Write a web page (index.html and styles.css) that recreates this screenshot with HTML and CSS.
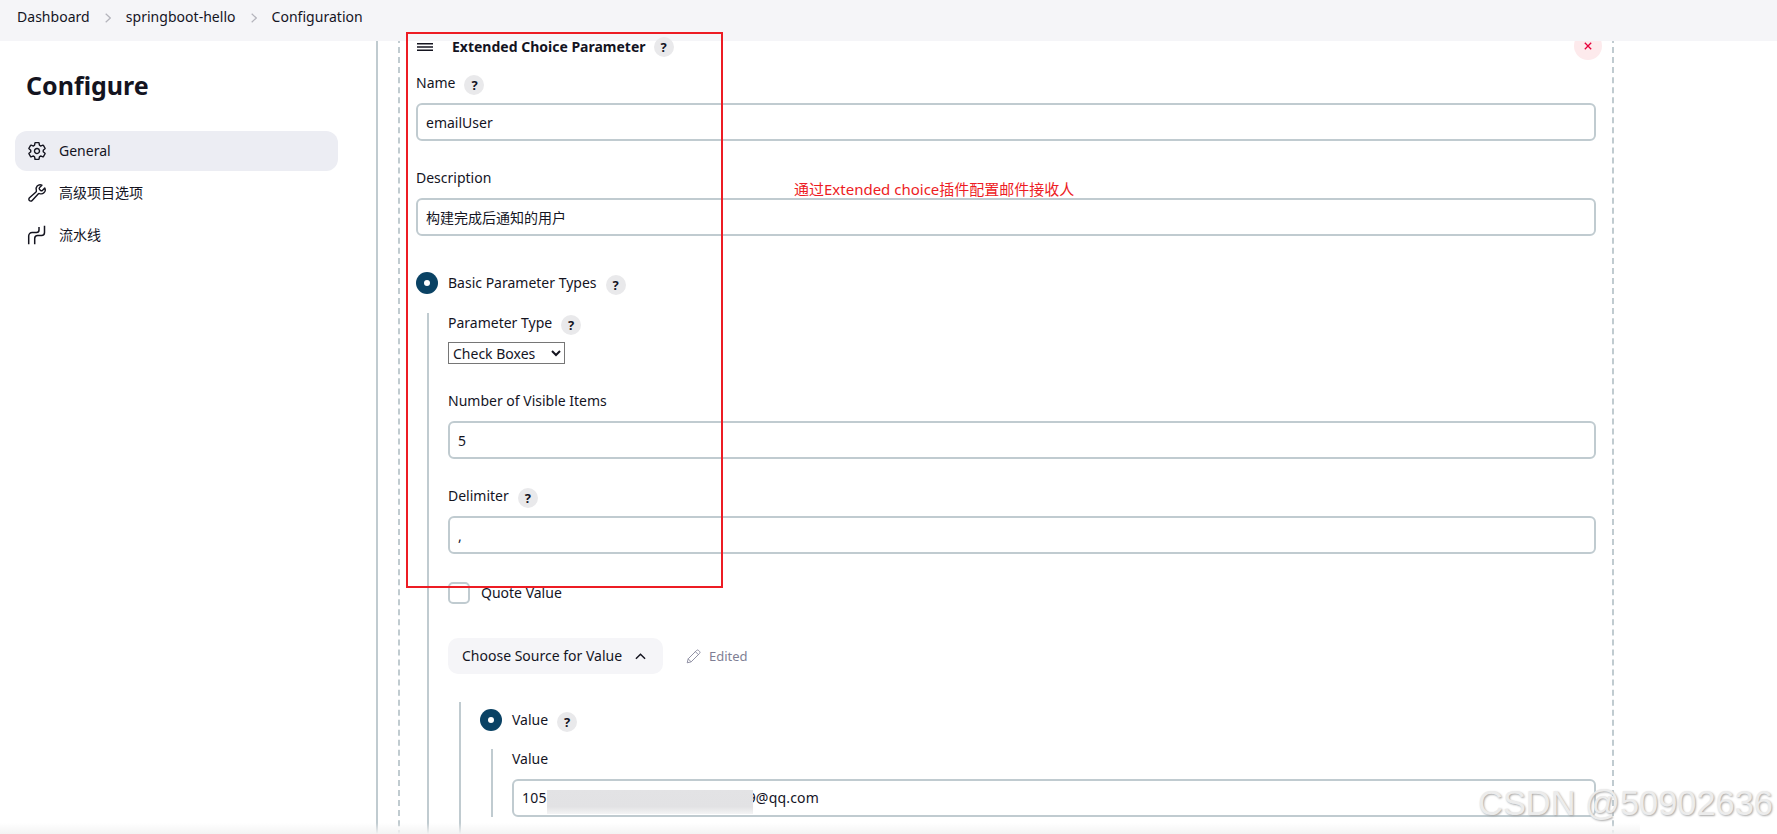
FILE: index.html
```html
<!DOCTYPE html>
<html lang="en">
<head>
<meta charset="utf-8">
<title>springboot-hello Config</title>
<link rel="stylesheet" href="styles.css">
</head>
<body>
<header class="topbar">
  <span>Dashboard</span>
  <svg class="crumb-sep" viewBox="0 0 6 10"><path d="M.7.7 5.3 5 .7 9.3"/></svg>
  <span>springboot-hello</span>
  <svg class="crumb-sep" viewBox="0 0 6 10"><path d="M.7.7 5.3 5 .7 9.3"/></svg>
  <span>Configuration</span>
</header>
<div class="main">
  <aside class="sidebar">
    <h1 class="side-title">Configure</h1>
    <nav class="side-nav">
      <a class="side-item active">
        <svg class="side-icon" viewBox="0 0 512 512"><path d="M262.29 192.31a64 64 0 1057.4 57.4 64.13 64.13 0 00-57.4-57.4zM416.39 256a154.34 154.34 0 01-1.53 20.79l45.21 35.46a10.81 10.81 0 012.45 13.75l-42.77 74a10.81 10.81 0 01-13.14 4.59l-44.9-18.08a16.11 16.11 0 00-15.17 1.75A164.48 164.48 0 01325 400.8a15.94 15.94 0 00-8.82 12.14l-6.73 47.89a11.08 11.08 0 01-10.68 9.17h-85.54a11.11 11.11 0 01-10.69-8.87l-6.72-47.82a16.07 16.07 0 00-9-12.22 155.3 155.3 0 01-21.46-12.57 16 16 0 00-15.11-1.71l-44.89 18.07a10.81 10.81 0 01-13.14-4.58l-42.77-74a10.8 10.8 0 012.45-13.75l38.21-30a16.05 16.05 0 006-14.08c-.36-4.17-.58-8.33-.58-12.5s.21-8.27.58-12.35a16 16 0 00-6.07-13.94l-38.19-30A10.81 10.81 0 0149.48 186l42.77-74a10.81 10.81 0 0113.14-4.59l44.9 18.08a16.11 16.11 0 0015.17-1.75A164.48 164.48 0 01187 111.2a15.94 15.94 0 008.82-12.14l6.73-47.89A11.08 11.08 0 01213.23 42h85.54a11.11 11.11 0 0110.69 8.87l6.72 47.82a16.07 16.07 0 009 12.22 155.3 155.3 0 0121.46 12.57 16 16 0 0015.11 1.71l44.89-18.07a10.81 10.81 0 0113.14 4.58l42.77 74a10.8 10.8 0 01-2.45 13.75l-38.21 30a16.05 16.05 0 00-6.05 14.08c.33 4.14.55 8.3.55 12.47z"/></svg>
        <span>General</span>
      </a>
      <a class="side-item">
        <svg class="side-icon" viewBox="0 0 512 512"><path d="M393.87 190a32.1 32.1 0 01-45.25 0l-26.57-26.57a32.09 32.09 0 010-45.26L382.19 58a1 1 0 00-.3-1.64c-38.82-16.64-89.15-8.16-121.11 23.57-30.58 30.35-32.32 76-21.12 115.84a31.93 31.93 0 01-9.06 32.08L64 380a48.17 48.17 0 1068 68l153.86-167a31.93 31.93 0 0131.6-9.13c39.54 10.59 84.54 8.6 114.72-21.19 32.49-32 39.5-88.56 23.75-120.93a1 1 0 00-1.6-.26z"/></svg>
        <span>高级项目选项</span>
      </a>
      <a class="side-item">
        <svg class="side-icon pipe" viewBox="0 0 20 20"><path d="M1.7 19.3V11a3.5 3.5 0 0 1 3.5-3.5H9.5A2.5 2.5 0 0 0 12 5V2M7.7 19.3v-5.8a3 3 0 0 1 3-3h3.8a3 3 0 0 0 3-3V.7"/></svg>
        <span>流水线</span>
      </a>
    </nav>
  </aside>
  <section class="content">
    <div class="chunk">
      <div class="chunk-head">
        <svg class="burger" viewBox="0 0 16 8"><path d="M0 .75h16M0 4h16M0 7.25h16"/></svg>
        <strong class="chunk-title">Extended Choice Parameter</strong>
        <span class="help head-help">?</span>
        <span class="close"><svg viewBox="0 0 8 8"><path d="M.8.8l6.4 6.4M7.2.8.8 7.2"/></svg></span>
      </div>

      <div class="label first"><span>Name</span><span class="help">?</span></div>
      <input class="text-input" value="emailUser">

      <div class="label"><span>Description</span></div>
      <input class="text-input" value="构建完成后通知的用户">

      <div class="radio-row top"><span class="radio"></span><span>Basic Parameter Types</span><span class="help">?</span></div>

      <div class="nested outer">
        <div class="label flush"><span>Parameter Type</span><span class="help">?</span></div>
        <select class="select"><option>Check Boxes</option></select>

        <div class="label"><span>Number of Visible Items</span></div>
        <input class="text-input" value="5">

        <div class="label"><span>Delimiter</span><span class="help">?</span></div>
        <input class="text-input" value=",">

        <label class="check-row"><span class="checkbox"></span><span>Quote Value</span></label>

        <div class="source-row">
          <button class="source-btn">Choose Source for Value
            <svg class="chev" viewBox="0 0 12 7"><path d="M1 6l5-5 5 5"/></svg>
          </button>
          <span class="edited">
            <svg class="pencil" viewBox="0 0 16 16"><path d="M1.3 14.7l1-4.2L11.2 1.6a1.6 1.6 0 0 1 2.3 0l.9.9a1.6 1.6 0 0 1 0 2.3L5.5 13.7zM2.3 10.5l3.2 3.2M10 2.8l3.2 3.2"/></svg>
            Edited
          </span>
        </div>

        <div class="nested inner">
          <div class="radio-row"><span class="radio"></span><span>Value</span><span class="help">?</span></div>
          <div class="nested leaf">
            <div class="label flush"><span>Value</span></div>
            <div class="text-input value-box">105<span class="redact"></span><span class="tail">9</span>@qq.com</div>
          </div>
        </div>
      </div>
    </div>
  </section>
</div>
<div class="fade"></div>
<div class="red-box"></div>
<div class="note">通过Extended choice插件配置邮件接收人</div>
<div class="watermark">CSDN @50902636</div>
</body>
</html>
```
FILE: styles.css
```css
* { box-sizing: border-box; }
html, body { height: 100%; }
body {
  margin: 0;
  height: 834px;
  overflow: hidden;
  display: flex;
  flex-direction: column;
  position: relative;
  background: #fff;
  color: #14141f;
  font: 14px/20px "Noto Sans", "Noto Sans CJK SC", sans-serif;
}
.topbar {
  position: relative;
  z-index: 2;
  flex: 0 0 41px;
  display: flex;
  align-items: center;
  gap: 15px;
  padding: 0 0 7px 17px;
  background: #f5f5f8;
  word-spacing: .5px;
  letter-spacing: .03px;
}
.crumb-sep { width: 6px; height: 10px; fill: none; stroke: #b4b4bc; stroke-width: 1.2; margin-top: 2px; }
.main { flex: 1; min-height: 0; display: flex; overflow: hidden; margin-top: -8px; padding-top: 8px; }

.sidebar { flex: 0 0 376px; padding-left: 15px; }
.side-title { margin: 27px 0 29px 11px; font-size: 25px; line-height: 34px; font-weight: 700; }
.side-nav { width: 323px; display: flex; flex-direction: column; gap: 2px; }
.side-item { height: 40px; display: flex; align-items: center; gap: 12px; padding-left: 12px; border-radius: 12px; }
.side-item.active { background: #ecedf3; }
.side-icon { width: 20px; height: 20px; fill: none; stroke: #14141f; stroke-width: 36; stroke-linejoin: round; stroke-linecap: round; }
.side-icon.pipe { stroke-width: 1.5; stroke-linecap: butt; }

.content { flex: 1; min-width: 0; border-left: 2px solid #c0cbd0; padding: 0 163px 0 20px; }
.chunk {
  position: relative;
  border-left: 2px dashed #c0cbd0;
  border-right: 2px dashed #c0cbd0;
  padding: 0 16px;
}
.chunk-head { height: 20px; margin-top: -4px; display: flex; align-items: center; position: relative; }
.burger { width: 16px; height: 8px; fill: none; stroke: #14141f; stroke-width: 1.5; margin-left: 1px; }
.chunk-title { position: relative; z-index: 3; margin-left: 19px; font-weight: 700; }
.help {
  flex: none;
  width: 20px;
  height: 20px;
  margin-left: 8px;
  border-radius: 50%;
  background: #e9e9eb;
  color: #14141f;
  font: 700 13px/20px "Noto Sans", sans-serif;
  text-align: center;
}
.head-help { position: relative; z-index: 3; }
.close {
  position: absolute;
  right: -6px;
  top: -5px;
  width: 28px;
  height: 28px;
  border-radius: 50%;
  background: #fdeaec;
  display: flex;
  align-items: center;
  justify-content: center;
}
.close svg { width: 8px; height: 8px; fill: none; stroke: #e6003a; stroke-width: 1.3; }

.label { height: 20px; margin: 27px 0 10px; display: flex; align-items: center; }
.label.first { margin-top: 16px; }
.label.flush { margin-top: 0; }
.label .help { margin-left: 9px; margin-top: 3px; }

.text-input {
  display: block;
  width: 100%;
  height: 38px;
  padding: 0 8px;
  border: 2px solid #c0cbd0;
  border-radius: 6px;
  background: #fff;
  color: #14141f;
  font: inherit;
  outline: none;
}
.value-box { line-height: 34px; white-space: nowrap; overflow: hidden; letter-spacing: .2px; }
.redact {
  position: relative;
  z-index: 1;
  display: inline-block;
  vertical-align: top;
  width: 206px;
  height: 24px;
  margin-top: 9px;
  background: linear-gradient(#e3e3e5, #e2e2e4 70%, #f4f4f5);
}
.tail { margin-left: -5px; }

.radio-row { display: flex; align-items: center; height: 22px; gap: 10px; }
.radio-row.top { margin-top: 36px; }
.radio-row .help { margin-left: -1px; margin-top: 3px; }
.radio { flex: none; position: relative; width: 22px; height: 22px; border-radius: 50%; background: #0a4264; }
.radio::after { content: ""; position: absolute; left: 8px; top: 8px; width: 6px; height: 6px; border-radius: 50%; background: #fff; }

.nested { margin-left: 11px; padding-left: 19px; border-left: 2px solid #c0cbd0; }
.nested.outer { margin-top: 19px; padding-bottom: 120px; }
.nested.inner { margin-top: 28px; padding-top: 7px; padding-bottom: 100px; }
.nested.leaf { margin-top: 18px; }

.select {
  display: block;
  width: 117px;
  height: 22px;
  margin-top: -1px;
  background: #fff;
  color: #14141f;
  border: 1px solid #767676;
  border-radius: 0;
  font: inherit;
  padding: 0;
}
.check-row { display: flex; align-items: center; gap: 11px; height: 22px; margin-top: 28px; }
.checkbox { width: 22px; height: 22px; border: 2px solid #c0cbd0; border-radius: 5px; background: #fff; }

.source-row { display: flex; align-items: center; margin-top: 34px; gap: 23px; }
.source-btn {
  display: flex;
  align-items: center;
  gap: 13px;
  width: 215px;
  height: 36px;
  padding: 0 0 0 14px;
  border: 0;
  border-radius: 10px;
  background: #f5f5f8;
  color: #14141f;
  font: inherit;
}
.chev { width: 11px; height: 7px; fill: none; stroke: #14141f; stroke-width: 1.6; }
.edited { display: flex; align-items: center; gap: 8px; color: #7f7f95; font-size: 13px; }
.pencil { width: 15px; height: 15px; fill: none; stroke: #8a8a9e; stroke-width: 1; stroke-linejoin: round; }

.fade {
  position: absolute;
  left: 0;
  bottom: 0;
  width: 1640px;
  height: 11px;
  background: linear-gradient(#ffffff00, #f3f3f3);
}
.red-box {
  position: absolute;
  left: 406px;
  top: 32px;
  width: 317px;
  height: 556px;
  border: 2px solid #ed1c24;
  z-index: 3;
}
.note { position: absolute; left: 794px; top: 179px; color: #ed1c24; white-space: nowrap; font-size: 15px; }
.watermark {
  position: absolute;
  right: 4px;
  top: 784px;
  z-index: 4;
  font: 34.4px/38px "Liberation Sans", sans-serif;
  color: #ececec;
  text-shadow: 1px 1px 2px #a8a8a8;
  white-space: nowrap;
}
```
